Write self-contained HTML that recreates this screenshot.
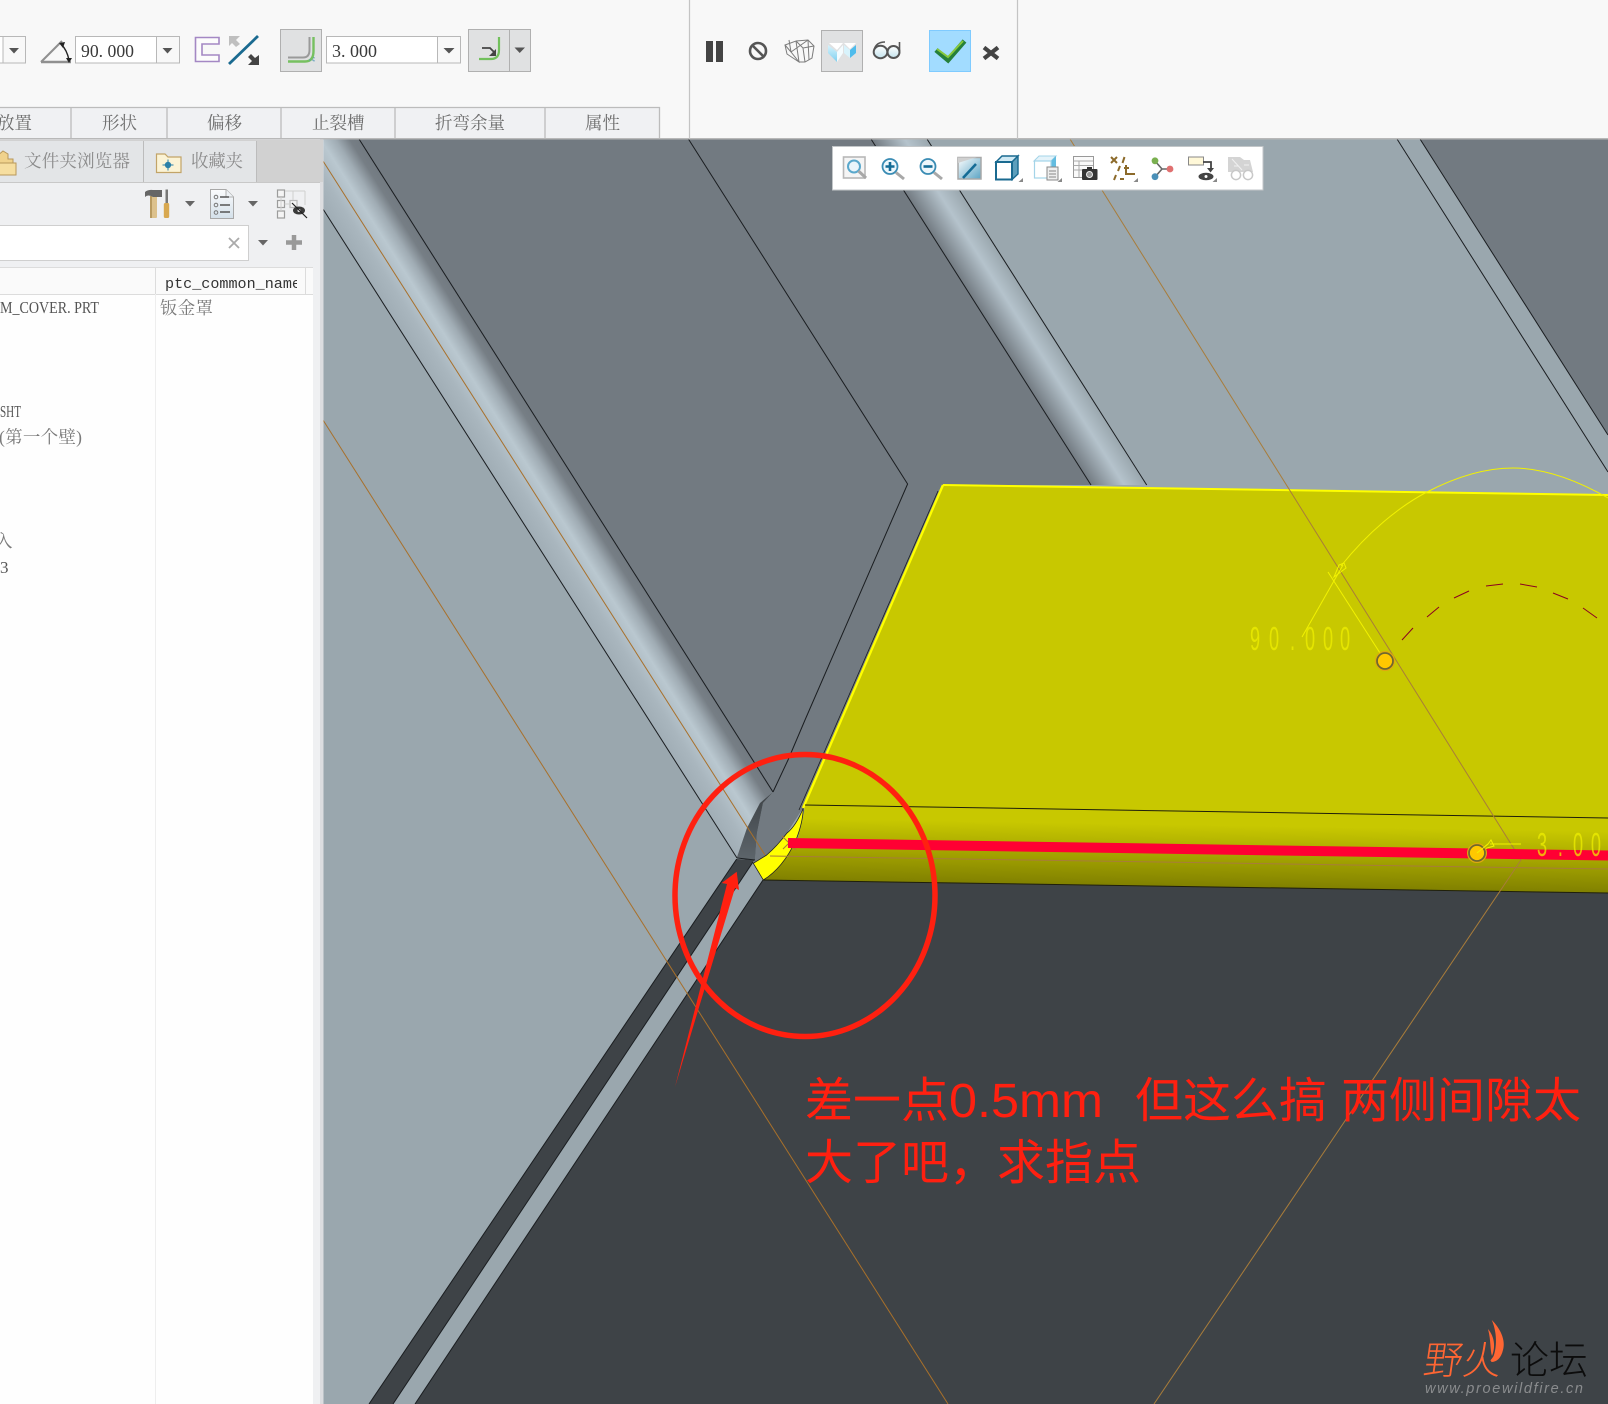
<!DOCTYPE html>
<html lang="zh">
<head>
<meta charset="utf-8">
<title>钣金罩</title>
<style>
html,body{margin:0;padding:0;background:#9aa7ae;}
body{width:1608px;height:1404px;overflow:hidden;}
svg{display:block;}
.t{font-family:"Liberation Serif","Noto Serif CJK SC",serif;font-size:17.5px;fill:#6e6e6e;}
.n{font-family:"Liberation Serif",serif;font-size:18px;fill:#3a3a3a;}
.m{font-family:"Liberation Serif","Noto Serif CJK SC",serif;font-size:17px;fill:#555;}
.r{font-family:"Liberation Sans","Noto Sans CJK SC",sans-serif;font-size:48px;fill:#ff2010;}
.d{font-family:"Liberation Sans",sans-serif;font-size:33px;fill:#f0f000;fill-opacity:.72;}
</style>
</head>
<body>
<svg xmlns="http://www.w3.org/2000/svg" width="1608" height="1404" viewBox="0 0 1608 1404">
<defs>
<linearGradient id="s1" gradientUnits="userSpaceOnUse" x1="324.4" y1="210.7" x2="381.5" y2="174.5">
<stop offset="0" stop-color="#a0adb5"/><stop offset=".25" stop-color="#a9b6be"/><stop offset=".52" stop-color="#bac8d0"/><stop offset=".7" stop-color="#a0acb4"/><stop offset=".88" stop-color="#767e85"/><stop offset="1" stop-color="#727a81"/>
</linearGradient>
<linearGradient id="s2" gradientUnits="userSpaceOnUse" x1="871" y1="139" x2="911" y2="113.6">
<stop offset="0" stop-color="#727a81"/><stop offset=".6" stop-color="#b5c3cc"/><stop offset="1" stop-color="#9aa7ae"/>
</linearGradient>
<linearGradient id="bend" gradientUnits="userSpaceOnUse" x1="1200" y1="825" x2="1199" y2="888">
<stop offset="0" stop-color="#c8c800"/><stop offset="1" stop-color="#7f7f00"/>
</linearGradient>
<linearGradient id="sl" x1="0" y1="0" x2="0" y2="1">
<stop offset="0" stop-color="#3e4347"/><stop offset="1" stop-color="#5d656b"/>
</linearGradient>
<linearGradient id="sv" x1="0" y1="0" x2="1" y2="1">
<stop offset="0" stop-color="#ffffff"/><stop offset="1" stop-color="#5aa4c4"/>
</linearGradient>
<linearGradient id="doc" x1="0" y1="0" x2="0" y2="1">
<stop offset="0" stop-color="#fbfcfd"/><stop offset="1" stop-color="#d4e0ea"/>
</linearGradient>
<linearGradient id="cy" x1="0" y1="0" x2="0" y2="1">
<stop offset="0" stop-color="#d8f3fc"/><stop offset="1" stop-color="#7fd0f0"/>
</linearGradient>
<linearGradient id="gl" x1="0" y1="0" x2="0" y2="1">
<stop offset="0" stop-color="#ffffff"/><stop offset="1" stop-color="#c4e4ee"/>
</linearGradient>
<clipPath id="hc"><rect x="160" y="268" width="137" height="26"/></clipPath>
</defs>

<!-- viewport -->
<rect x="323" y="139" width="1285" height="1265" fill="#9aa7ae"/>
<polygon points="359,139 871,139 1091,485 943,485 803,808 787,833 767,855 753,863 755,860 757,833 763,803 773,792" fill="#727a81"/>
<polygon points="1420,139 1608,139 1608,435" fill="#727a81"/>
<polygon points="323,139 359,139 773,792 760,803 747,828 736.7,858 323,209" fill="url(#s1)"/>
<polygon points="871,139 927,139 1146.7,485 1091,485" fill="url(#s2)"/>
<polygon points="773,792 760,803 747,828 736.7,858 755,860 757,833 763,803" fill="url(#sl)"/>
<polygon points="736.7,859 755,860 753,862 393,1404 369,1404" fill="#3e4347"/>
<polygon points="763,880 1608,893 1608,1404 415,1404" fill="#3e4347"/>

<g fill="none" stroke="#1a1d20" stroke-width="1">
<path d="M323 209 L737 858"/>
<path d="M359 139 L773 792"/>
<path d="M688.4 139 L907.6 484 L805 720 L788 760 L773 792"/>
<path d="M871 139 L1091 485"/>
<path d="M927 139 L1146.7 485"/>
<path d="M1397 139 L1608 472"/>
<path d="M1420 139 L1608 435"/>
<path d="M736.7 859 L369 1404"/>
<path d="M753 862 L393 1404"/>
<path d="M763 880 L415 1404"/>
<path d="M737 858 L755 860"/>
</g>
<g fill="none" stroke="#a8702a" stroke-width="1">
<path d="M323 161 L765 855"/>
<path d="M323 420 L948 1404"/>
</g>

<!-- yellow flange -->
<polygon points="943,485 1608,495 1608,818 805,805" fill="#c8c800"/>
<path d="M805 805 L1608 818 L1608 893 L763 880 Q790 858 798 837 Q803 820 805 805 Z" fill="url(#bend)"/>
<polygon points="943,485 1608,495 1608,812 805,800" fill="#c8c800"/>
<path d="M753.3 863.3 L763.3 880 Q783 868 796 840 Q803 822 803.3 808 Q796 826 787 833 Q777 846 766.7 855 Z" fill="#ffff00" stroke="#222" stroke-width=".8"/>
<path d="M943 485 L803 808" stroke="#ffff00" stroke-width="2.4" fill="none"/>
<path d="M943 485 L1608 495" stroke="#ffff00" stroke-width="2" fill="none"/>
<path d="M805 805 L1608 818" stroke="#1f1f0a" stroke-width="1" fill="none"/>
<path d="M763 880 L1608 893" stroke="#1f1f0a" stroke-width="1" fill="none"/>
<path d="M941 491 L802 810" stroke="#1a1d20" stroke-width=".8" fill="none" transform="translate(-3,0)"/>

<!-- long orange lines -->
<g fill="none" stroke="#a87c3a" stroke-width="1">
<path d="M1070 139 L1521 860 L1154 1404"/>
<path d="M770 856 L1608 869"/>
<path d="M782 836 L796 850 M783 849 L790 842"/>
</g>

<!-- red edge -->
<path d="M788 843 L1608 855.5" stroke="#ff0033" stroke-width="10" fill="none"/>

<!-- dims -->
<g fill="none" stroke="#f2f200" stroke-width="1">
<path d="M1341 566 C1368 532 1400 506 1427 492 C1452 479 1482 468 1513 468 C1547 468 1580 482 1608 498"/>
<path d="M1328 572 L1380 653"/>
<path d="M1343 565 L1302 637"/>
<path d="M1334 577 L1339 565 L1344 563 L1346 568 Z"/>
<path d="M1477 853 L1488 844 L1491 840 L1494 846 L1487 848 Z"/>
<path d="M1490 844 L1521 844"/>
</g>
<g fill="none" stroke="#8b0020" stroke-width="1">
<path d="M1402 640 L1413 628 M1427 617 L1439 607 M1454 598 L1469 591 M1486 586 L1503 584 M1520 584 L1537 587 M1553 593 L1568 599 M1583 608 L1597 618"/>
</g>
<circle cx="1385" cy="661" r="9.5" fill="#ffc800" stroke="#e0a810" stroke-width="1"/>
<circle cx="1385" cy="661" r="8" fill="#ffc800" stroke="#6f6630" stroke-width="1.8"/>
<circle cx="1477" cy="853" r="9.5" fill="#ffc800" stroke="#e0a810" stroke-width="1"/>
<circle cx="1477" cy="853" r="8" fill="#ffc800" stroke="#6f6630" stroke-width="1.8"/>
<path d="M1477 853 L1488 844" stroke="#f2f200" fill="none"/>
<text class="d" transform="translate(1250,650) scale(.55,1)" x="0 34.5 72.7 100 132.7 163.6" y="0">90.000</text>
<text class="d" transform="translate(1537,856) scale(.55,1)" x="0 38 65.5 98" y="0">3.00</text>

<!-- annotation -->
<ellipse cx="805" cy="895.5" rx="130" ry="141" fill="none" stroke="#ff2010" stroke-width="5.5"/>
<polygon points="675,1087 727,884 721.7,883 736.7,871.7 739,890 735,888" fill="#ff2010"/>
<text class="r" x="805" y="1117">差一点</text>
<text class="r" x="949" y="1117" textLength="154" lengthAdjust="spacingAndGlyphs">0.5mm</text>
<text class="r" x="1135" y="1117">但这么搞</text>
<text class="r" x="1341" y="1117">两侧间隙太</text>
<text class="r" x="805" y="1179">大了吧，</text>
<text class="r" x="997" y="1179">求指点</text>

<!-- watermark -->
<text transform="translate(1422,1374) skewX(-8)" font-family="'Liberation Sans','Noto Sans CJK SC',sans-serif" font-size="39" font-weight="300" fill="#ff6633">野火</text>
<path d="M1491.7 1320 C1500 1328 1506 1340 1503 1350 C1501 1358 1497 1362 1491 1362 C1497 1352 1498 1334 1491.7 1320 Z" fill="#ff6633"/>
<path d="M1488 1329 C1494 1336 1496 1346 1492 1356 C1490 1350 1491 1340 1488 1329 Z" fill="#ff6633"/>
<text x="1510" y="1374" font-family="'Liberation Sans','Noto Sans CJK SC',sans-serif" font-size="39" font-weight="300" fill="#0c0c0c">论坛</text>
<text x="1425" y="1393" font-family="'Liberation Sans',sans-serif" font-size="14.5" font-style="italic" fill="#8a8c8e" textLength="158" lengthAdjust="spacing">www.proewildfire.cn</text>

<!-- top ribbon -->
<rect x="0" y="0" width="1608" height="138" fill="#f8f8f8"/>
<rect x="0" y="138" width="1608" height="1.5" fill="#b8b8b8"/>
<path d="M689.5 0 V139 M1017.5 0 V139" stroke="#c4c4c4" stroke-width="1.2"/>

<!-- inputs -->
<rect x="-4" y="36.5" width="29.5" height="26.5" fill="#fff" stroke="#b8b8b8"/>
<rect x="3" y="37" width="22" height="25.5" fill="#f8f8f8"/>
<path d="M3 36.5 V63" stroke="#b8b8b8"/>
<polygon points="9,48 19,48 14,53.5" fill="#555"/>

<path d="M41 62 L62 41" stroke="#909090" stroke-width="2" fill="none"/>
<path d="M41 62 H71" stroke="#909090" stroke-width="2.4" fill="none"/>
<path d="M61 44 Q67 50 69 60" stroke="#222" stroke-width="1.4" fill="none"/>
<polygon points="59,43 65,42 63,48" fill="#222"/>
<polygon points="66,58 72,58 69,63" fill="#222"/>

<rect x="75.5" y="36.5" width="104" height="26.5" fill="#fff" stroke="#b8b8b8"/>
<rect x="156" y="37" width="23" height="25.5" fill="#f8f8f8"/>
<path d="M156.5 36.5 V63" stroke="#b8b8b8"/>
<text class="n" x="81" y="57" textLength="53" lengthAdjust="spacingAndGlyphs">90. 000</text>
<polygon points="162.5,48 172.5,48 167.5,53.5" fill="#555"/>

<path d="M219 37.5 H195.5 V61.5 H219 V55 H202 V44 H219 Z" fill="#fcfcfc" stroke="#a488c4" stroke-width="1.6"/>
<path d="M229 64 L258 36" stroke="#1a6a90" stroke-width="2.8" fill="none"/>
<polygon points="229,36 240,36 236,40 240,44 236,47 232,43 229,46" fill="#bfbfbf"/>
<polygon points="259,65 248,65 252,61 248,57 251,54 255,58 259,55" fill="#444"/>

<rect x="280.5" y="29.5" width="41" height="42" fill="#e0e1e2" stroke="#b0b0b0"/>
<path d="M288 57.5 H303 Q309.5 57.5 309.5 50 V37" fill="none" stroke="#9a9a9a" stroke-width="2"/>
<path d="M288 61.5 H305 Q313.5 61.5 313.5 51 V37" fill="none" stroke="#76c060" stroke-width="2.4"/>
<path d="M309 60 H314 M314 57 V62" stroke="#5a9ab8" stroke-width="1" stroke-dasharray="1.5 1.5" fill="none"/>

<rect x="326.5" y="36.5" width="134" height="26.5" fill="#fff" stroke="#b8b8b8"/>
<rect x="437" y="37" width="23" height="25.5" fill="#f8f8f8"/>
<path d="M437.5 36.5 V63" stroke="#b8b8b8"/>
<text class="n" x="332" y="57" textLength="45" lengthAdjust="spacingAndGlyphs">3. 000</text>
<polygon points="443.5,48 454.5,48 449,53.5" fill="#555"/>

<rect x="468.5" y="29.5" width="62" height="42" fill="#e0e1e2" stroke="#b0b0b0"/>
<path d="M509.5 30 V71" stroke="#b0b0b0"/>
<path d="M479 59 H491 Q499 59 499 50 V37" fill="none" stroke="#72c05c" stroke-width="2.2"/>
<path d="M482 48 H490 L494 52" fill="none" stroke="#444" stroke-width="1.8"/>
<polygon points="489,56 496,49 496,56" fill="#444"/>
<polygon points="514.5,47.5 525,47.5 519.7,53" fill="#555"/>

<!-- right controls -->
<rect x="706" y="41" width="7" height="21" fill="#444"/>
<rect x="716" y="41" width="7" height="21" fill="#444"/>
<circle cx="758" cy="51" r="8" fill="none" stroke="#555" stroke-width="2.6"/>
<path d="M752.5 45.5 L763.5 56.5" stroke="#555" stroke-width="2.6"/>
<g fill="none" stroke="#7c7c7c" stroke-width="1">
<path d="M785 45 L796 41 L799 62 L787 54 Z"/>
<path d="M796 41 L808 40 L814 46 L812 58 L805 62 L799 62"/>
<path d="M785 45 L791 52 L799 62 M791 52 L808 40 M796 41 L803 48 L805 62 M803 48 L814 46 M791 52 L789 40 M808 40 L809 60"/>
</g>
<rect x="821.5" y="30.5" width="41" height="41" fill="#e0e1e2" stroke="#b0b0b0"/>
<polygon points="829,43 843,43 837,50" fill="#fff"/>
<polygon points="844,43 856,43 850,49" fill="#fff"/>
<polygon points="828,45 837,52 837,62 828,53" fill="url(#cy)"/>
<polygon points="837,52 843,45 843,53 837,62" fill="#f4fcff"/>
<polygon points="844,45 850,50 850,58 844,53" fill="#d8f3fc"/>
<polygon points="850,50 856,45 856,53 850,58" fill="#4fbcec"/>
<ellipse cx="880.5" cy="52" rx="6.8" ry="6.2" fill="url(#gl)" stroke="#555" stroke-width="2"/>
<ellipse cx="893.5" cy="52" rx="6" ry="6" fill="url(#gl)" stroke="#555" stroke-width="2"/>
<path d="M874 50 Q876 42 885 42 M899.5 51 V42" fill="none" stroke="#555" stroke-width="1.6"/>
<rect x="929.5" y="30.5" width="41" height="41" fill="#a2dcff" stroke="#7fcbff"/>
<polyline points="936,50 948,60 964.5,41" fill="none" stroke="#25803a" stroke-width="5"/>
<polyline points="937,49 948,57 963,41" fill="none" stroke="#86c83c" stroke-width="2"/>
<path d="M984 47.5 L998 58.5 M998 47.5 L984 58.5" stroke="#444" stroke-width="4.2" fill="none"/>

<!-- feature tabs -->
<rect x="0" y="107" width="659" height="31" fill="#f0f1f3"/>
<path d="M0 107.5 H659.5 V138 M71 107 V138 M167 107 V138 M281 107 V138 M395 107 V138 M545 107 V138" fill="none" stroke="#bcbcbc" stroke-width="1.3"/>
<text class="t" x="-3" y="129">放置</text>
<text class="t" x="102" y="129">形状</text>
<text class="t" x="207" y="129">偏移</text>
<text class="t" x="312" y="129">止裂槽</text>
<text class="t" x="435" y="129">折弯余量</text>
<text class="t" x="585" y="129">属性</text>

<!-- left panel -->
<rect x="0" y="139.5" width="323" height="1264.5" fill="#eff0f2"/>
<rect x="320" y="139.5" width="3.5" height="1264.5" fill="#dcdde0"/>
<rect x="0" y="140" width="323" height="42" fill="#d1d1d1"/>
<rect x="0" y="141" width="143" height="41.5" fill="#e3e5e7"/>
<rect x="144" y="141" width="112" height="41.5" fill="#e3e5e7"/>
<path d="M143.5 141 V182 M256.5 141 V182" stroke="#bcbcbc"/>
<path d="M0 182.5 H320" stroke="#c8c8c8"/>
<path d="M-3 156 L3 151 L8 154 V159 H13 V170 H-3 Z" fill="#f0d28c" stroke="#b8985a"/>
<path d="M-3 163 H16 V175 H-3 Z" fill="#f6dea0" stroke="#b8985a"/>
<text class="t" x="24" y="167" style="fill:#8c8c8c" textLength="106">文件夹浏览器</text>
<path d="M156.5 154 L165 154 L168 157 H181 V172.5 H156.5 Z" fill="#fbf3d5" stroke="#c2a468" stroke-width="1.2"/>
<circle cx="168" cy="165" r="3.2" fill="#2a80a8"/>
<path d="M168 159.5 V170.5 M162.5 165 H173.5" stroke="#2a80a8" stroke-width="1"/>
<text class="t" x="191" y="167" style="fill:#8c8c8c" textLength="52">收藏夹</text>

<rect x="150" y="196" width="7" height="22" rx="1" fill="#dcc18c"/>
<rect x="150" y="196" width="2" height="22" fill="#b89a60"/>
<path d="M145 192 Q148 189.5 153 190 H162 V197 H153 Q148 194 145 197 Z" fill="#666"/>
<rect x="165.5" y="189.5" width="2.5" height="14" fill="#777"/>
<rect x="163.8" y="203" width="5.4" height="15" rx="1.5" fill="#d8a850"/>
<polygon points="185,201 195,201 190,206.5" fill="#666"/>
<path d="M210.5 189.5 H226 L233.5 197 V218.5 H210.5 Z" fill="url(#doc)" stroke="#a8a8a8"/>
<path d="M226 189.5 V197 H233.5" fill="#eef2f6" stroke="#b0b0b0"/>
<path d="M220 197 H229 M220 205 H230 M220 212 H230" stroke="#555" stroke-width="1.5"/>
<circle cx="216" cy="197" r="1.8" fill="none" stroke="#777"/>
<circle cx="216" cy="205" r="1.8" fill="none" stroke="#777"/>
<circle cx="216" cy="212.5" r="1.8" fill="none" stroke="#777"/>
<polygon points="248,201 258,201 253,206.5" fill="#666"/>
<g fill="#f4f4f4" stroke="#9c9c9c" stroke-width="1.2">
<rect x="277.5" y="190" width="7" height="7"/><rect x="277.5" y="200.5" width="7" height="7"/><rect x="277.5" y="211" width="7" height="7"/>
<rect x="290" y="200.5" width="7" height="7" stroke="#bbb"/>
</g>
<path d="M281 197 V211 M284.5 204 H290 M285 191 H305 M293 191 V200 M305 191 V205" fill="none" stroke="#cfcfcf"/>
<ellipse cx="299" cy="210.5" rx="6" ry="4" fill="#3a3a3a"/>
<circle cx="299" cy="210.5" r="1.5" fill="#eee"/>
<path d="M292 203 L307 218" stroke="#222" stroke-width="1.2"/>

<rect x="-2" y="225.5" width="250.5" height="35" fill="#fff" stroke="#cfcfcf"/>
<path d="M229 238 L239 248 M239 238 L229 248" stroke="#aaa" stroke-width="1.8"/>
<polygon points="258,240 268,240 263,245.5" fill="#666"/>
<path d="M294 235 V250 M286 242.5 H302" stroke="#999" stroke-width="4.5"/>

<!-- table -->
<rect x="0" y="267" width="313" height="1137" fill="#fefefe"/>
<rect x="0" y="267" width="313" height="27" fill="#fafafa"/>
<path d="M0 267.5 H313 M0 294.5 H313" stroke="#dcdcdc" fill="none"/>
<path d="M155.5 267 V294 M305.5 267 V294" stroke="#dcdcdc"/>
<path d="M155.5 294 V1404" stroke="#eeeeee"/>
<text clip-path="url(#hc)" x="165" y="288" font-family="'Liberation Mono',monospace" font-size="15" fill="#333" textLength="136" lengthAdjust="spacingAndGlyphs">ptc_common_name</text>
<text class="m" x="0" y="313" textLength="99" lengthAdjust="spacingAndGlyphs">M_COVER. PRT</text>
<text class="t" x="160" y="314" style="fill:#7a7a7a" textLength="53">钣金罩</text>
<text class="m" x="0" y="417" textLength="21" lengthAdjust="spacingAndGlyphs">SHT</text>
<text class="t" x="-1" y="443" style="fill:#7a7a7a" textLength="83">(第一个壁)</text>
<text class="t" x="-5" y="547" style="fill:#7a7a7a">入</text>
<text class="m" x="0" y="573">3</text>

<!-- floating view toolbar -->
<rect x="832.5" y="146.5" width="430.5" height="43.5" fill="#fff" stroke="#c2c6c8"/>
<!-- refit -->
<rect x="843.5" y="157" width="21.5" height="21" fill="#f5f5f5" stroke="#b8b8b8" stroke-width="1.6"/>
<circle cx="854" cy="166.5" r="6" fill="#eaf5fb" stroke="#5aa8cc" stroke-width="2"/>
<path d="M858.5 171 L866 178" stroke="#a8a8a8" stroke-width="3"/>
<!-- zoom in -->
<circle cx="890" cy="166.5" r="7.5" fill="#eef7fc" stroke="#3a8cb4" stroke-width="1.8"/>
<path d="M890 162 V171 M885.5 166.5 H894.5" stroke="#156c96" stroke-width="2.6"/>
<path d="M896 172.5 L904 179" stroke="#a8a8a8" stroke-width="3"/>
<!-- zoom out -->
<circle cx="928" cy="166.5" r="7.5" fill="#eef7fc" stroke="#3a8cb4" stroke-width="1.8"/>
<path d="M923.5 166.5 H932.5" stroke="#156c96" stroke-width="2.6"/>
<path d="M934 172.5 L942 179" stroke="#a8a8a8" stroke-width="3"/>
<!-- pan -->
<rect x="958" y="157.5" width="23" height="21.5" fill="url(#sv)" stroke="#a8a8a8" stroke-width="1.5"/>
<path d="M958 163 Q970 159 977 157.5 L958 157.5 Z" fill="#d0d0d0"/>
<path d="M963 178 L976 164" stroke="#156c96" stroke-width="2.6"/>
<!-- cube -->
<polygon points="996,162 1002,156 1018,156 1012,162" fill="#cfe9f4" stroke="#1a6a90" stroke-width="1.4"/>
<polygon points="1012,162 1018,156 1018,174 1012,179.5" fill="#5d9fbc" stroke="#1a6a90" stroke-width="1.4"/>
<rect x="996" y="162" width="16" height="17.5" fill="#fff" stroke="#1a6a90" stroke-width="2"/>
<polygon points="1023,178 1023,182 1018.5,182" fill="#888"/>
<!-- light cube -->
<polygon points="1034,161 1039,156 1056,156 1051,161" fill="#e4f3fa" stroke="#a4d4e8"/>
<polygon points="1051,161 1056,156 1056,174 1051,178" fill="#62bce0"/>
<rect x="1034.5" y="161" width="16.5" height="17" fill="#fff" stroke="#a4d4e8" stroke-width="1.2"/>
<rect x="1047" y="167" width="11" height="13" fill="#eee" stroke="#888"/>
<path d="M1049 171 H1056 M1049 174 H1056 M1049 177 H1056" stroke="#888"/>
<polygon points="1062,178 1062,182 1057.5,182" fill="#888"/>
<!-- table camera -->
<rect x="1073.5" y="156.5" width="20" height="21" fill="#fafafa" stroke="#999"/>
<path d="M1073.5 161 H1093 M1073.5 165.5 H1093 M1073.5 170 H1093 M1079 161 V177" stroke="#aaa"/>
<rect x="1082" y="169" width="15.5" height="11" rx="1" fill="#333"/>
<rect x="1087" y="167" width="5" height="3" fill="#333"/>
<circle cx="1089.5" cy="174.5" r="3" fill="#999" stroke="#eee"/>
<!-- csys -->
<g stroke="#8c6a2a" stroke-width="2" fill="none">
<path d="M1111 157 L1117 163 M1117 157 L1111 163 M1122.5 163 L1124.5 157"/>
<path d="M1118 171 L1120 166 M1126 175 V165 M1126 174 H1135 M1114 180 L1116 175 M1120 179 H1124 M1124 168 H1129"/>
</g>
<polygon points="1138,178 1138,182 1133.5,182" fill="#888"/>
<!-- nodes -->
<path d="M1155 161 L1162 169 L1170 169 M1162 169 L1155 177" fill="none" stroke="#666" stroke-width="1.6"/>
<circle cx="1155" cy="160.8" r="3.4" fill="#7ab050"/>
<circle cx="1170" cy="169" r="3.4" fill="#e07070"/>
<circle cx="1155" cy="176.7" r="3.4" fill="#4a90b8"/>
<!-- display -->
<rect x="1188.5" y="157" width="15" height="8" fill="#fff8d8" stroke="#888"/>
<path d="M1203 162 H1211 V169" fill="none" stroke="#444" stroke-width="1.8"/>
<polygon points="1207,168 1214,168 1210.5,172.5" fill="#444"/>
<ellipse cx="1206" cy="176.5" rx="7.5" ry="3.8" fill="#444"/>
<circle cx="1206" cy="176.5" r="1.5" fill="#fff"/>
<polygon points="1217,178 1217,182 1212.5,182" fill="#888"/>
<!-- disabled -->
<polygon points="1228,157 1240,157 1244,160 1250,160 1253,172 1228,172" fill="#d4d4d4"/>
<path d="M1232 159 L1242 170 M1234 166 H1238 M1244 165 H1249" stroke="#f0f0f0" fill="none"/>
<circle cx="1236" cy="175" r="4.6" fill="#fff" stroke="#c8c8c8" stroke-width="1.5"/>
<circle cx="1248" cy="175" r="4.6" fill="#fff" stroke="#c8c8c8" stroke-width="1.5"/>
</svg>
</body>
</html>
